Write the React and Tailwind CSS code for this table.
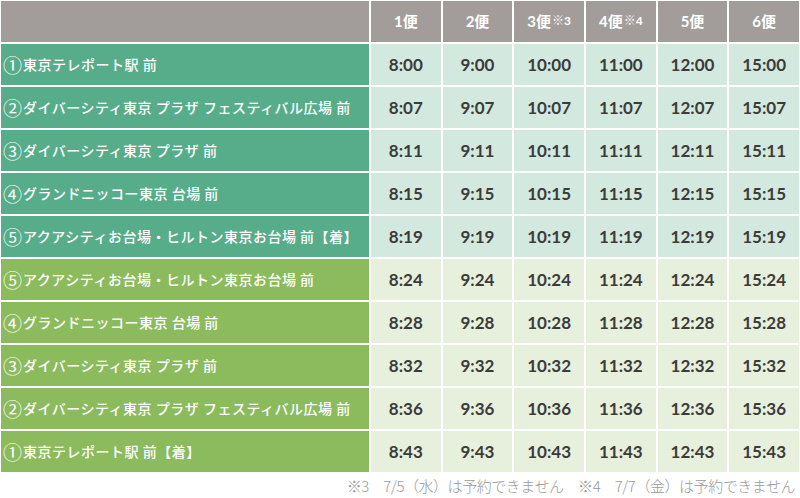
import React from "react";

const heads = [
  { n: "1便" },
  { n: "2便" },
  { n: "3便", note: "※3" },
  { n: "4便", note: "※4" },
  { n: "5便" },
  { n: "6便" },
];

const outbound = [
  ["①", "東京テレポート駅 前", ["8:00", "9:00", "10:00", "11:00", "12:00", "15:00"]],
  ["②", "ダイバーシティ東京 プラザ フェスティバル広場 前", ["8:07", "9:07", "10:07", "11:07", "12:07", "15:07"]],
  ["③", "ダイバーシティ東京 プラザ 前", ["8:11", "9:11", "10:11", "11:11", "12:11", "15:11"]],
  ["④", "グランドニッコー東京 台場 前", ["8:15", "9:15", "10:15", "11:15", "12:15", "15:15"]],
  ["⑤", "アクアシティお台場・ヒルトン東京お台場 前【着】", ["8:19", "9:19", "10:19", "11:19", "12:19", "15:19"]],
];

const inbound = [
  ["⑤", "アクアシティお台場・ヒルトン東京お台場 前", ["8:24", "9:24", "10:24", "11:24", "12:24", "15:24"]],
  ["④", "グランドニッコー東京 台場 前", ["8:28", "9:28", "10:28", "11:28", "12:28", "15:28"]],
  ["③", "ダイバーシティ東京 プラザ 前", ["8:32", "9:32", "10:32", "11:32", "12:32", "15:32"]],
  ["②", "ダイバーシティ東京 プラザ フェスティバル広場 前", ["8:36", "9:36", "10:36", "11:36", "12:36", "15:36"]],
  ["①", "東京テレポート駅 前【着】", ["8:43", "9:43", "10:43", "11:43", "12:43", "15:43"]],
];

const Row = ({ num, stop, times, dark, light }) => (
  <>
    <div
      className={`${dark} flex items-center pl-[2px] text-white text-[14px] font-medium tracking-[0.5px] font-['Noto_Sans_CJK_JP',sans-serif]`}
    >
      <span className="text-[19px] leading-none font-normal tracking-normal mr-[1px]">{num}</span>
      {stop}
    </div>
    {times.map((t, i) => (
      <div key={i} className={`${light} flex items-center justify-center text-[#3b3b3b] text-[17px] font-bold`}>
        {t}
      </div>
    ))}
  </>
);

export default function App() {
  return (
    <div
      className="w-[800px] h-[498px] bg-white"
      style={{ fontFamily: 'Lato, "Noto Sans CJK JP", sans-serif' }}
    >
      <div className="grid grid-cols-[368px_repeat(6,1fr)] auto-rows-[41px] gap-[2px] p-[1px]">
        <div className="bg-[#a29d9b]" />
        {heads.map((h) => (
          <div key={h.n} className="bg-[#a29d9b] flex items-center justify-center text-white text-[15px] font-bold">
            <span>
              {h.n}
              {h.note && <sup className="text-[12px] ml-[1px] relative -top-[2px]">{h.note}</sup>}
            </span>
          </div>
        ))}
        {outbound.map(([n, s, t]) => (
          <Row key={s} num={n} stop={s} times={t} dark="bg-[#57ad8a]" light="bg-[#d3e9df]" />
        ))}
        {inbound.map(([n, s, t]) => (
          <Row key={s} num={n} stop={s} times={t} dark="bg-[#8cbb5e]" light="bg-[#e6f0dc]" />
        ))}
      </div>
      <div className="flex justify-end pr-[5px] pt-[1px] text-[15px] text-[#9a9a9a] leading-[24px] tracking-[-0.45px] font-['Noto_Sans_CJK_JP',sans-serif] font-light">
        <span>※3　7/5（水）は予約できません　※4　7/7（金）は予約できません</span>
      </div>
    </div>
  );
}
